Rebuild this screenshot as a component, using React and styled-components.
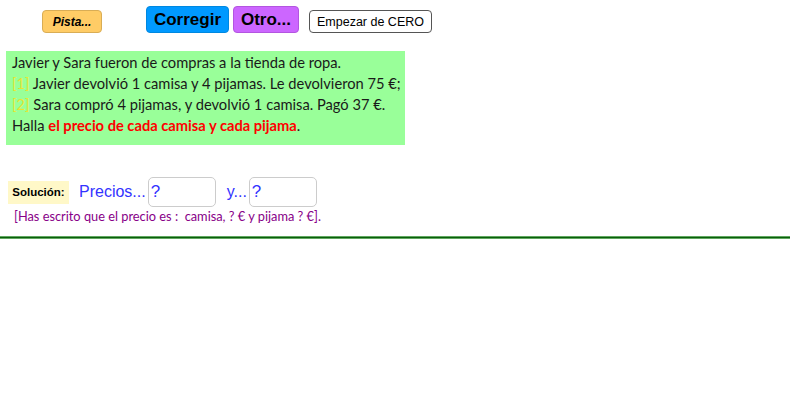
import React from 'react'
import styled, { createGlobalStyle } from 'styled-components'

const Global = createGlobalStyle`
  body {
    margin: 0;
    background: #fff;
    font-family: "Liberation Sans", Arial, sans-serif;
  }
`

const Page = styled.div`
  width: 792px;
  height: 420px;
  overflow: hidden;
`

const Toolbar = styled.div`
  display: flex;
  align-items: flex-end;
  padding: 6px 0 0 42px;
  height: 27px;
`

const Button = styled.button`
  box-sizing: border-box;
  height: ${p => p.$tall ? 27 : 23}px;
  width: ${p => p.$w}px;
  margin-left: ${p => p.$gap || 0}px;
  padding: 0;
  background: ${p => p.$bg};
  border: 1px solid ${p => p.$border};
  border-radius: 4px;
  font-family: "Liberation Sans", Arial, sans-serif;
  font-size: ${p => p.$size}px;
  font-weight: ${p => p.$bold ? 'bold' : 'normal'};
  font-style: ${p => p.$italic ? 'italic' : 'normal'};
  color: #000;
  cursor: pointer;
`

const Statement = styled.div`
  box-sizing: border-box;
  margin: 18px 0 0 6px;
  width: 399px;
  height: 94px;
  padding: 1px 0 0 6px;
  background: #99ff99;
  font-family: Lato, "Open Sans", sans-serif;
  font-size: 14.7px;
  line-height: 21px;
  color: #1a1a1a;
`

const Num = styled.span`
  color: #e6e633;
`

const Red = styled.span`
  color: #ff0000;
  font-weight: bold;
`

const AnswerRow = styled.div`
  display: flex;
  align-items: center;
  margin: 32px 0 0 8px;
`

const Tag = styled.div`
  box-sizing: border-box;
  width: 61px;
  height: 23px;
  background: #fff8c8;
  display: flex;
  align-items: center;
  justify-content: center;
  font-size: 11.5px;
  font-weight: bold;
  color: #000;
`

const Label = styled.span`
  margin-left: ${p => p.$gap}px;
  margin-right: 2px;
  font-size: 16px;
  color: #3333ff;
`

const Field = styled.div`
  box-sizing: border-box;
  width: 68px;
  height: 30px;
  border: 1px solid #cccccc;
  border-radius: 5px;
  padding: 4px 0 0 2px;
  font-size: 17px;
  color: #3333ff;
  background: #fff;
`

const Feedback = styled.div`
  margin: 1px 0 0 14px;
  font-family: Lato, "Open Sans", sans-serif;
  font-size: 12.8px;
  line-height: 16px;
  color: #880088;
`

const Rule = styled.div`
  margin-top: 12px;
  width: 790px;
  height: 3px;
  background: linear-gradient(#5fa85f 0, #5fa85f 1px, #0b5d0b 1px, #0b5d0b 2px, #5fa85f 2px);
`

export default function App() {
  return (
    <Page>
      <Global />
      <Toolbar>
        <Button $w={60} $bg="#ffcc66" $border="#d9ad55" $size={12} $bold $italic>Pista...</Button>
        <Button $tall $w={83} $gap={44} $bg="#0099ff" $border="#0088e0" $size={17} $bold>Corregir</Button>
        <Button $tall $w={66} $gap={4} $bg="#cc66ff" $border="#b355e0" $size={17} $bold>Otro...</Button>
        <Button $w={123} $gap={10} $bg="#ffffff" $border="#555555" $size={12.5}>Empezar de CERO</Button>
      </Toolbar>
      <Statement>
        <div>Javier y Sara fueron de compras a la tienda de ropa.</div>
        <div><Num>[1]</Num> Javier devolvió 1 camisa y 4 pijamas. Le devolvieron 75 €;</div>
        <div><Num>[2]</Num> Sara compró 4 pijamas, y devolvió 1 camisa. Pagó 37 €.</div>
        <div>Halla <Red>el precio de cada camisa y cada pijama</Red>.</div>
      </Statement>
      <AnswerRow>
        <Tag>Solución:</Tag>
        <Label $gap={10}>Precios...</Label>
        <Field>?</Field>
        <Label $gap={11}>y...</Label>
        <Field>?</Field>
      </AnswerRow>
      <Feedback>[Has escrito que el precio es :&nbsp; camisa, ? € y pijama ? €].</Feedback>
      <Rule />
    </Page>
  )
}
